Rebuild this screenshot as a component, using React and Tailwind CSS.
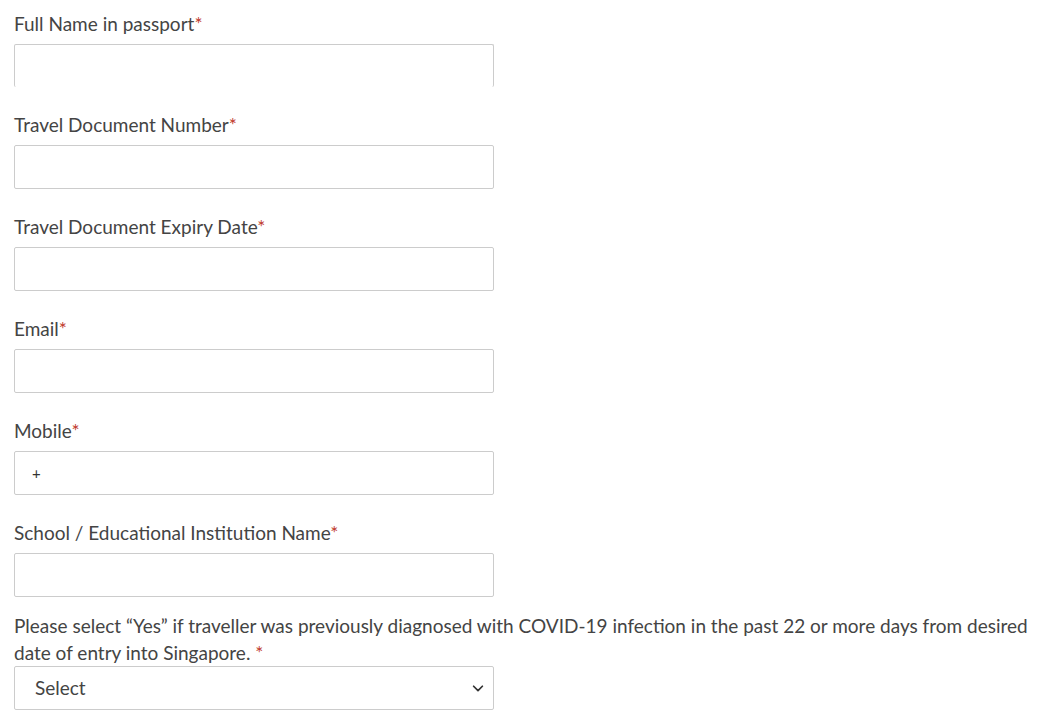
import React from 'react';

const fields = [
  { label: 'Full Name in passport', cut: true },
  { label: 'Travel Document Number' },
  { label: 'Travel Document Expiry Date' },
  { label: 'Email' },
  { label: 'Mobile', prefix: '+' },
  { label: 'School / Educational Institution Name' },
];

function Star() {
  return <span className="text-[#c0392b]">*</span>;
}

export default function App() {
  return (
    <div className="min-h-[728px] bg-white pl-[14px] pt-[11px] font-['Lato',sans-serif] text-[#444]">
      {fields.map(f => (
        <div key={f.label} className="mb-[25px]">
          <label className="block text-[19px] leading-[26px] mb-[7px]">
            {f.label}
            <Star />
          </label>
          <div
            className={`w-[480px] bg-white border border-[#ccc] rounded-[2px] flex items-center px-[17px] ${
              f.cut ? 'h-[43px] border-b-0' : 'h-[44px]'
            }`}
          >
            {f.prefix && <span className="text-[15px] text-[#333]">{f.prefix}</span>}
          </div>
        </div>
      ))}

      <div className="-mt-[10px]">
        <label className="block text-[19px] leading-[27px] pr-4">
          Please select “Yes” if traveller was previously diagnosed with COVID-19 infection in the past 22 or more days from desired date of entry into Singapore.{' '}
          <Star />
        </label>
        <div className="w-[480px] h-[44px] border border-[#ccc] rounded-[2px] flex items-center justify-between pl-5 pr-[8px]">
          <span className="text-[19px] text-[#444]">Select</span>
          <svg width="14" height="14" viewBox="0 0 16 16" fill="none" stroke="#333" strokeWidth="2" strokeLinecap="round" strokeLinejoin="round">
            <path d="M3 6l5 5 5-5" />
          </svg>
        </div>
      </div>
    </div>
  );
}
